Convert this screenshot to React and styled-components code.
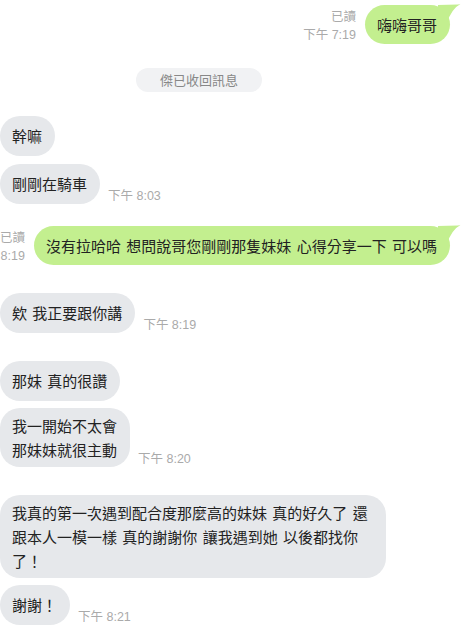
import React from 'react';
import styled, {createGlobalStyle} from 'styled-components';

const GlobalStyle = createGlobalStyle`
  * {
    box-sizing: border-box;
  }
  body {
    margin: 0;
    background: #fff;
    font-family: "Noto Sans CJK TC", "Liberation Sans", sans-serif;
    overflow: hidden;
  }
`;

const Chat = styled.div`
  width: 465px;
  height: 632px;
  padding: 5px 15px 0 0;
  display: flex;
  flex-direction: column;
  overflow: hidden;
`;

const Row = styled.div`
  display: flex;
  align-items: flex-end;
  justify-content: ${p => (p.mine ? 'flex-end' : 'flex-start')};
  margin-top: ${p => p.gap || 0}px;
`;

const Bubble = styled.div`
  position: relative;
  flex-shrink: 0;
  min-height: ${p => (p.mine ? 39 : 40)}px;
  display: flex;
  align-items: center;
  padding: 5.5px 13px 5.5px 12px;
  border-radius: 20px;
  font-size: 15px;
  line-height: 24px;
  word-spacing: 2px;
  color: #222;
  white-space: ${p => (p.wrap ? 'normal' : 'nowrap')};
  max-width: ${p => (p.wrap ? '386px' : 'none')};
  background: ${p => (p.mine ? '#c3ef8f' : '#e6e8eb')};
  svg {
    position: absolute;
    right: -12px;
    top: -2px;
  }
`;

const Time = styled.div`
  flex-shrink: 0;
  margin-left: 8px;
  font-family: "Liberation Sans", "Noto Sans CJK TC", sans-serif;
  font-size: 12.5px;
  line-height: 16px;
  color: #aaa;
  white-space: nowrap;
`;

const Meta = styled.div`
  flex-shrink: 0;
  margin-right: 9px;
  display: flex;
  flex-direction: column;
  align-items: flex-end;
  font-family: "Liberation Sans", "Noto Sans CJK TC", sans-serif;
  font-size: 12.5px;
  line-height: 18px;
  color: #aaa;
  white-space: nowrap;
`;

const Notice = styled.div`
  align-self: flex-start;
  margin: 24px 0 0 136px;
  height: 24px;
  padding: 0 24px;
  border-radius: 12px;
  background: #f1f2f4;
  color: #888;
  font-size: 13px;
  line-height: 24px;
`;

const Tail = () => (
  <svg width="24" height="24" viewBox="0 0 24 24">
    <path d="M0 2 L20 1.6 Q23 1.2 23.5 0.2 Q13 6 9 20 L0 20 Z" fill="#c3ef8f" />
  </svg>
);

const Mine = ({children, time, gap}) => (
  <Row mine gap={gap}>
    <Meta>
      <span>已讀</span>
      <span>{time}</span>
    </Meta>
    <Bubble mine>
      {children}
      <Tail />
    </Bubble>
  </Row>
);

const Theirs = ({children, time, gap, wrap}) => (
  <Row gap={gap}>
    <Bubble wrap={wrap}>
      <span>{children}</span>
    </Bubble>
    {time && <Time>{time}</Time>}
  </Row>
);

export default function App() {
  return (
    <>
      <GlobalStyle />
      <Chat>
        <Mine time="下午 7:19">嗨嗨哥哥</Mine>
        <Notice>傑已收回訊息</Notice>
        <Theirs gap={24}>幹嘛</Theirs>
        <Theirs gap={8} time="下午 8:03">剛剛在騎車</Theirs>
        <Mine gap={22} time="下午 8:19">
          沒有拉哈哈 想問說哥您剛剛那隻妹妹 心得分享一下 可以嗎
        </Mine>
        <Theirs gap={28} time="下午 8:19">欸 我正要跟你講</Theirs>
        <Theirs gap={28}>那妹 真的很讚</Theirs>
        <Theirs gap={7} time="下午 8:20">
          我一開始不太會
          <br />
          那妹妹就很主動
        </Theirs>
        <Theirs gap={28} wrap>
          我真的第一次遇到配合度那麼高的妹妹 真的好久了 還跟本人一模一樣 真的謝謝你 讓我遇到她 以後都找你了！
        </Theirs>
        <Theirs gap={7} time="下午 8:21">謝謝！</Theirs>
      </Chat>
    </>
  );
}
